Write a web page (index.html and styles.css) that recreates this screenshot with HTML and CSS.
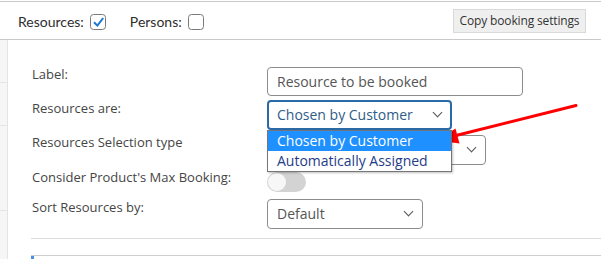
FILE: index.html
```html
<!DOCTYPE html>
<html>
<head>
<meta charset="utf-8">
<link rel="stylesheet" href="styles.css">
</head>
<body>
<div class="page">
  <header class="bar">
    <span class="bar-label">Resources:</span>
    <span class="cb">
      <svg width="16" height="16" viewBox="0 0 16 16"><rect x="0.5" y="0.5" width="15" height="15" rx="3" fill="#fff" stroke="#7a7a7a"/><path d="M4 8.2 L7.4 11.6 L13.2 4" fill="none" stroke="#1a78d6" stroke-width="2"/></svg>
    </span>
    <span class="bar-label second">Persons:</span>
    <span class="cb">
      <svg width="16" height="16" viewBox="0 0 16 16"><rect x="0.5" y="0.5" width="15" height="15" rx="3" fill="#fff" stroke="#7a7a7a"/></svg>
    </span>
    <span class="spacer"></span>
    <button class="copy-btn">Copy booking settings</button>
  </header>
  <div class="main">
    <aside class="strip">
      <div class="seg s1"></div>
      <div class="seg s2"></div>
      <div class="seg s3"></div>
    </aside>
    <section class="content">
      <div class="row">
        <div class="lbl">Label:</div>
        <div class="field input w256 mt2">Resource to be booked</div>
      </div>
      <div class="row">
        <div class="lbl">Resources are:</div>
        <div class="wrap mt1">
          <div class="field select focus w185">Chosen by Customer<span class="chev"></span></div>
          <ul class="dropdown">
            <li class="opt active">Chosen by Customer</li>
            <li class="opt">Automatically Assigned</li>
          </ul>
        </div>
      </div>
      <div class="row">
        <div class="lbl">Resources Selection type</div>
        <div class="field select w219 mt2"><span class="chev"></span></div>
      </div>
      <div class="row mb6">
        <div class="lbl">Consider Product's Max Booking:</div>
        <div class="toggle mt4"></div>
      </div>
      <div class="row">
        <div class="lbl">Sort Resources by:</div>
        <div class="field select w156 mt1">Default<span class="chev"></span></div>
      </div>
      <div class="sep"></div>
      <div class="next"><span class="mark"></span></div>
    </section>
  </div>
  <svg class="arrow" width="601" height="259" viewBox="0 0 601 259">
    <line x1="576" y1="105.5" x2="452" y2="136.5" stroke="#ff0000" stroke-width="3" stroke-linecap="round"/>
    <polygon points="437,140.5 455.5,128.5 459.5,143.5" fill="#ff0000"/>
  </svg>
</div>
</body>
</html>
```

FILE: styles.css
```css
* { box-sizing: border-box; }
html, body { margin: 0; padding: 0; background: #fff; }
body { width: 601px; height: 259px; overflow: hidden; }
.page { position: relative; padding-top: 1px; height: 259px; }

.bar {
  display: flex;
  align-items: center;
  height: 39px;
  border-top: 1px solid #c9c9c9;
  border-bottom: 1px solid #c9c9c9;
  padding: 0 15px 0 18px;
  font-family: Lato, "Open Sans", sans-serif;
  font-size: 14px;
  color: #2e2e2e;
}
.bar-label { line-height: 18px; padding-top: 2px; }
.bar-label.second { margin-left: 24px; }
.cb { display: flex; margin-left: 6px; margin-top: 2px; }
.cb svg { display: block; }
.spacer { flex: 1; }
.copy-btn {
  width: 133px;
  height: 24px;
  margin: 0;
  padding: 0;
  background: #efefef;
  border: 1px solid #d9d9d9;
  font-family: "Open Sans", sans-serif;
  font-size: 12px;
  color: #333;
  letter-spacing: -0.15px;
}

.main { display: flex; height: 219px; }
.strip {
  width: 8px;
  background: #f6f6f6;
  border-right: 1px solid #e4e4e4;
}
.seg { border-bottom: 1px solid #e4e4e4; }
.s1 { height: 43px; }
.s2 { height: 43px; }
.s3 { height: 85px; }

.content {
  flex: 1;
  padding: 25px 0 0 23px;
  font-family: "Open Sans", sans-serif;
}
.row { display: flex; align-items: flex-start; margin-bottom: 3px; }
.row.mb6 { margin-bottom: 6px; }
.lbl {
  width: 236px;
  flex: none;
  font-size: 13px;
  line-height: 18px;
  color: #454545;
  padding-left: 1px;
}
.mt1 { margin-top: 1px; }
.mt2 { margin-top: 2px; }
.mt4 { margin-top: 4px; }

.field {
  position: relative;
  height: 30px;
  border: 1px solid #8c8c8c;
  border-radius: 4px;
  padding-left: 9px;
  font-size: 14px;
  line-height: 28px;
  color: #555;
  background: #fff;
  white-space: nowrap;
}
.input { height: 29px; line-height: 27px; }
.w256 { width: 256px; }
.w185 { width: 185px; }
.w219 { width: 219px; }
.w156 { width: 156px; }
.select.focus {
  border: 2px solid #2a6aa8;
  padding-left: 8px;
  line-height: 26px;
  color: #2f5c88;
}
.chev {
  position: absolute;
  right: 10px;
  top: 50%;
  width: 7px;
  height: 7px;
  margin-top: -6px;
  border-right: 1.6px solid #555;
  border-bottom: 1.6px solid #555;
  transform: rotate(45deg);
}
.focus .chev { right: 9px; }

.wrap { position: relative; z-index: 2; }
.dropdown {
  position: absolute;
  left: 0;
  top: 30px;
  width: 185px;
  margin: 0;
  padding: 0;
  list-style: none;
  background: #fff;
  border: 1px solid #767676;
  box-shadow: 1px 1px 2px rgba(0,0,0,0.25);
}
.opt {
  height: 20px;
  line-height: 20px;
  padding-left: 9px;
  font-size: 14px;
  color: #1f3c8a;
  white-space: nowrap;
}
.opt.active { background: #1e90ff; color: #fff; }

.toggle {
  position: relative;
  width: 39px;
  height: 20px;
  border-radius: 10px;
  background: #d3d3d3;
}
.toggle::before {
  content: "";
  position: absolute;
  left: 1px;
  top: 1px;
  width: 18px;
  height: 18px;
  border-radius: 50%;
  background: #f7f7f7;
}

.sep { margin-top: 9px; height: 1px; background: #dcdcdc; }
.next {
  position: relative;
  margin-top: 16px;
  height: 4px;
  border-top: 1px solid #cfcfcf;
}
.mark {
  position: absolute;
  left: 0;
  top: 0;
  width: 3px;
  height: 3px;
  background: #4a90e2;
}

.arrow { position: absolute; left: 0; top: 0; pointer-events: none; }
```
